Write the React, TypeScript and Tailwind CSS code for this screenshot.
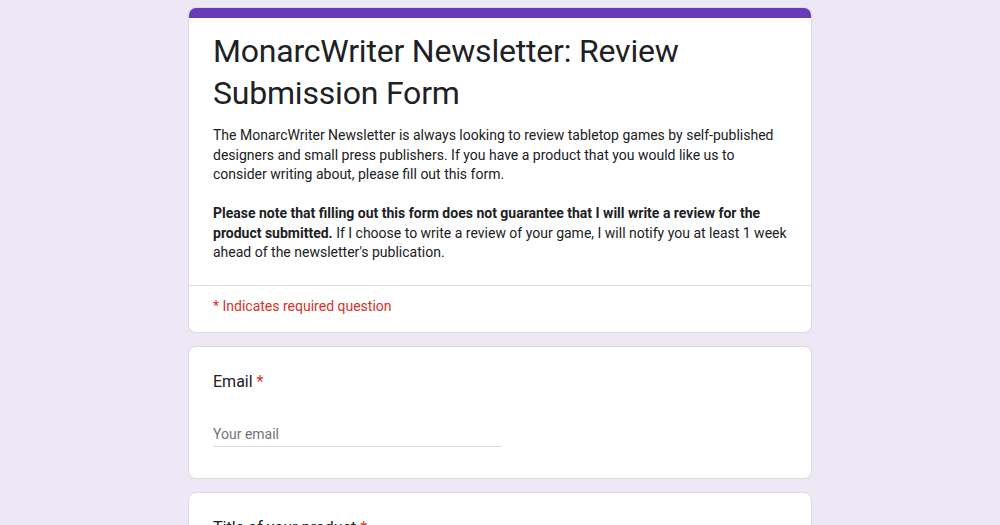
import React from "react";

export default function App() {
  return (
    <div className="min-h-[525px] w-full bg-[#ede7f6] flex flex-col items-center pt-[7px] gap-[13px]" style={{ fontFamily: "Roboto, Arial, sans-serif" }}>
      <div className="w-[624px] bg-white rounded-[8px] border border-[#dadce0] overflow-hidden">
        <div className="h-[10px] bg-[#673ab7]" />
        <div className="px-[24px] pt-[12px] pb-[22px]">
          <h1 className="text-[32px] leading-[42px] text-[#202124] tracking-[-0.2px]" style={{ fontFamily: "Roboto, Arial, sans-serif" }}>
            MonarcWriter Newsletter: Review Submission Form
          </h1>
          <div className="mt-[12px] text-[14px] leading-[19.5px] text-[#202124]">
            <p>
              The MonarcWriter Newsletter is always looking to review tabletop games by self-published designers and small press publishers. If you have a product that you would like us to consider writing about, please fill out this form.
            </p>
            <p className="mt-[19.5px]">
              <span className="font-bold">Please note that filling out this form does not guarantee that I will write a review for the product submitted.</span> If I choose to write a review of your game, I will notify you at least 1 week ahead of the newsletter's publication.
            </p>
          </div>
        </div>
        <div className="border-t border-[#dadce0] px-[24px] pt-[10px] pb-[16px] text-[14px] leading-[20px] text-[#d93025]">
          * Indicates required question
        </div>
      </div>

      <div className="w-[624px] bg-white rounded-[8px] border border-[#dadce0] px-[24px] pt-[23px] pb-[31px]">
        <div className="text-[16px] leading-[24px] text-[#202124]">
          Email <span className="text-[#d93025]">*</span>
        </div>
        <div className="mt-[30px] w-[288px] border-b border-[#dadce0] pb-[2px] text-[14px] leading-[20px] text-[#70757a]">
          Your email
        </div>
      </div>

      <div className="w-[624px] bg-white rounded-[8px] border border-[#dadce0] px-[24px] pt-[23px] pb-[30px] h-[120px]">
        <div className="text-[16px] leading-[24px] text-[#202124]">
          Title of your product <span className="text-[#d93025]">*</span>
        </div>
      </div>
    </div>
  );
}
